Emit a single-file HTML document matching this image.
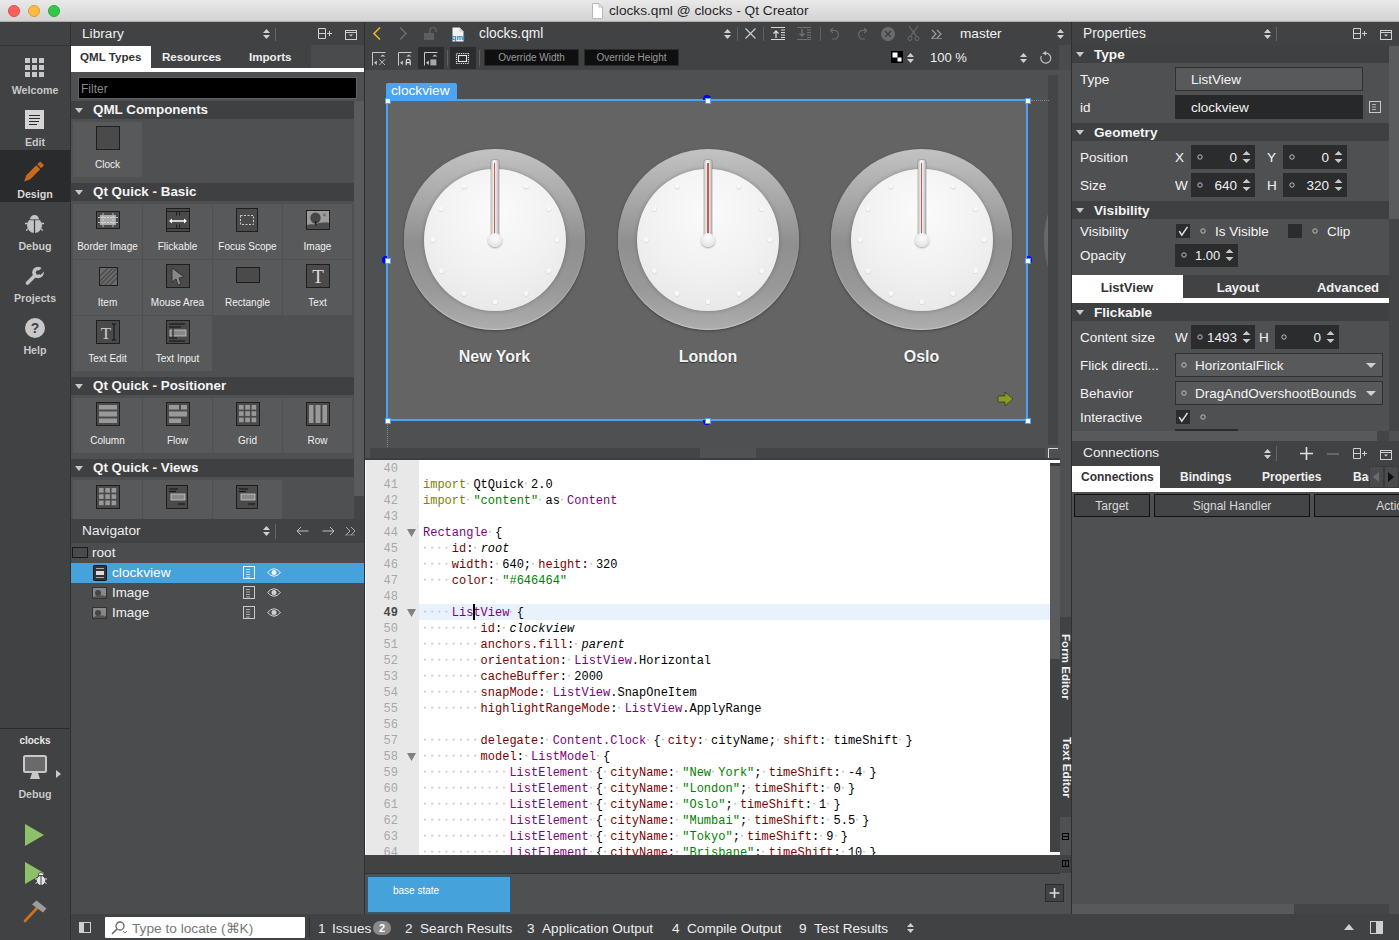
<!DOCTYPE html><html><head><meta charset="utf-8"><style>
*{margin:0;padding:0;box-sizing:border-box}
html,body{width:1399px;height:940px;overflow:hidden;background:#4f5052;font-family:"Liberation Sans",sans-serif}
div{position:absolute}
.t{white-space:nowrap;line-height:1}
svg{position:absolute;overflow:visible}
.ws{background-image:radial-gradient(circle at 2px 5.6px,#c8c8c8 0,#c8c8c8 0.7px,rgba(200,200,200,0) 1.3px);background-size:7.2px 100%;background-repeat:repeat-x}
.code{font-family:"Liberation Mono",monospace;font-size:12px;line-height:16px;white-space:pre;color:#000}
</style></head><body><div style="left:0px;top:0px;width:1399px;height:22px;background:linear-gradient(#e9e9e9,#d3d3d3);border-bottom:1px solid #aeaeae"></div><div style="left:8px;top:5px;width:12px;height:12px;border-radius:50%;background:#fc605c;border:0.5px solid #de4a46"></div><div style="left:28px;top:5px;width:12px;height:12px;border-radius:50%;background:#fdbc40;border:0.5px solid #dc9d2e"></div><div style="left:48px;top:5px;width:12px;height:12px;border-radius:50%;background:#34c84a;border:0.5px solid #26a93a"></div><svg style="left:591px;top:3px;" width="13" height="16" viewBox="0 0 13 16"><path d="M1.5 0.5 H8 L11.5 4 V15.5 H1.5 Z" fill="#fff" stroke="#b8b8b8"/><path d="M8 0.5 V4 H11.5" fill="none" stroke="#b8b8b8"/></svg><div class="t" style="left:609px;top:4px;font-size:13.7px;color:#262626">clocks.qml @ clocks - Qt Creator</div><div style="left:0px;top:22px;width:70px;height:918px;background:#404244"></div><div style="left:70px;top:22px;width:1px;height:918px;background:#2e2f30"></div><div style="left:0px;top:45px;width:70px;height:1px;background:#333436"></div><div style="left:0px;top:150px;width:70px;height:52px;background:#2a2b2c"></div><svg style="left:25px;top:58px;" width="19" height="19" viewBox="0 0 19 19"><rect x="0" y="0" width="5" height="5" fill="#c8c8c8"/><rect x="7" y="0" width="5" height="5" fill="#c8c8c8"/><rect x="14" y="0" width="5" height="5" fill="#c8c8c8"/><rect x="0" y="7" width="5" height="5" fill="#c8c8c8"/><rect x="7" y="7" width="5" height="5" fill="#c8c8c8"/><rect x="14" y="7" width="5" height="5" fill="#c8c8c8"/><rect x="0" y="14" width="5" height="5" fill="#c8c8c8"/><rect x="7" y="14" width="5" height="5" fill="#c8c8c8"/><rect x="14" y="14" width="5" height="5" fill="#c8c8c8"/></svg><div class="t" style="left:0.0px;top:85px;width:70px;text-align:center;font-size:10.7px;font-weight:bold;color:#c8c8c8">Welcome</div><svg style="left:25px;top:110px;" width="19" height="19" viewBox="0 0 19 19"><rect x="0" y="0" width="19" height="19" fill="#d4d4d4"/><path d="M4 5.5h11M4 8.5h11M4 11.5h10M4 14.5h8" stroke="#2a2a2a" stroke-width="1"/></svg><div class="t" style="left:0.0px;top:137px;width:70px;text-align:center;font-size:10.7px;font-weight:bold;color:#c8c8c8">Edit</div><svg style="left:23px;top:160px;" width="22" height="23" viewBox="0 0 22 23"><g transform="translate(11 11.5) rotate(45)"><path d="M0 14 L-2.8 8 V-6 H2.8 V8 Z" fill="#c96a1c"/><rect x="-2.8" y="-11.5" width="5.6" height="4.2" fill="#c96a1c"/></g></svg><div class="t" style="left:0.0px;top:189px;width:70px;text-align:center;font-size:10.7px;font-weight:bold;color:#d8d8d8">Design</div><svg style="left:24px;top:213px;" width="21" height="21" viewBox="0 0 21 21"><path d="M6 6.5 A4.5 4.5 0 0 1 15 6.5Z" fill="#c4c4c4"/><ellipse cx="10.5" cy="12.5" rx="7.5" ry="7.5" fill="#c4c4c4"/><path d="M10.5 6.5 V20" stroke="#404244" stroke-width="1.3"/><path d="M6 6.8 H15" stroke="#404244" stroke-width="0.8"/><path d="M1 10.5 H3.5 M17.5 10.5 H20 M2 17.5 L4 16 M19 17.5 L17 16" stroke="#c4c4c4" stroke-width="1.3"/></svg><div class="t" style="left:0.0px;top:241px;width:70px;text-align:center;font-size:10.7px;font-weight:bold;color:#c8c8c8">Debug</div><svg style="left:24px;top:265px;" width="21" height="21" viewBox="0 0 21 21"><path d="M3.5 18 L11 10.5" stroke="#c4c4c4" stroke-width="3.6" stroke-linecap="round"/><circle cx="14" cy="7.5" r="5.8" fill="#c4c4c4"/><path d="M14 7.5 L19 2.5 L22 5.5 L17 10.5Z" fill="#404244" transform="translate(-0.5 -0.5)"/><circle cx="14" cy="7.5" r="2.2" fill="#404244"/></svg><div class="t" style="left:0.0px;top:293px;width:70px;text-align:center;font-size:10.7px;font-weight:bold;color:#c8c8c8">Projects</div><svg style="left:25px;top:318px;" width="20" height="20" viewBox="0 0 20 20"><circle cx="10" cy="10" r="10" fill="#c8c8c8"/><text x="10" y="15" font-family="Liberation Sans" font-weight="bold" font-size="14" text-anchor="middle" fill="#404244">?</text></svg><div class="t" style="left:0.0px;top:345px;width:70px;text-align:center;font-size:10.7px;font-weight:bold;color:#c8c8c8">Help</div><div style="left:0px;top:728px;width:70px;height:1px;background:#2a2b2c"></div><div class="t" style="left:0.0px;top:736px;width:70px;text-align:center;font-size:10px;font-weight:bold;color:#e8e8e8">clocks</div><svg style="left:23px;top:755px;" width="24" height="25" viewBox="0 0 24 25"><rect x="1" y="1" width="22" height="16" rx="1.5" fill="#6a6a6a" stroke="#c8c8c8" stroke-width="2"/><path d="M9 18 L15 18 L17 24 L7 24 Z" fill="#c8c8c8"/></svg><svg style="left:56px;top:770px;" width="5" height="8" viewBox="0 0 5 8"><path d="M0 0 L5 4 L0 8Z" fill="#c8c8c8"/></svg><div class="t" style="left:0.0px;top:789px;width:70px;text-align:center;font-size:10.7px;font-weight:bold;color:#c8c8c8">Debug</div><svg style="left:25px;top:824px;" width="19" height="22" viewBox="0 0 19 22"><path d="M0 0 L19 11 L0 22Z" fill="#8ec26a"/></svg><svg style="left:25px;top:862px;" width="21" height="24" viewBox="0 0 21 24"><path d="M0 0 L19 11 L0 22Z" fill="#8ec26a"/><path d="M13 13.5 A3 3 0 0 1 19 13.5Z" fill="#e6e6e6" stroke="#404244" stroke-width="0.8"/><ellipse cx="16" cy="18.5" rx="4.6" ry="5" fill="#e6e6e6" stroke="#404244" stroke-width="1"/><path d="M16 14 V23.5" stroke="#404244" stroke-width="1"/><path d="M10 17 H12 M20 17 H22 M10.5 21.5 L12 20.5 M21.5 21.5 L20 20.5" stroke="#e6e6e6" stroke-width="1"/></svg><svg style="left:22px;top:899px;" width="26" height="24" viewBox="0 0 26 24"><path d="M3 22 L15 9" stroke="#d2711f" stroke-width="2.6" stroke-linecap="round"/><path d="M10 5.5 L14.5 1.5 L24.5 9.5 L21 13.5 Z" fill="#9c9c9c"/></svg><div style="left:71px;top:22px;width:293px;height:23px;background:#404244"></div><div class="t" style="left:82px;top:27px;font-size:13.7px;color:#eeeeee">Library</div><svg style="left:263px;top:29px;" width="7" height="10" viewBox="0 0 7 10"><path d="M0 4 L3.5 0 L7 4Z M0 6 L3.5 10 L7 6Z" fill="#d0d0d0"/></svg><div style="left:275px;top:28px;width:1px;height:13px;background:#666"></div><svg style="left:318px;top:28px;" width="14" height="12" viewBox="0 0 14 12"><path d="M0.5 0.5h7v10h-7z M0.5 5.5h7" fill="none" stroke="#d0d0d0"/><path d="M9 5.5h5M11.5 3v5" stroke="#d0d0d0"/></svg><svg style="left:345px;top:29px;" width="12" height="11" viewBox="0 0 12 11"><rect x="0.5" y="1.5" width="11" height="9" fill="none" stroke="#d0d0d0"/><path d="M0.5 3.5h11" stroke="#d0d0d0"/><path d="M4 5.5 L8 5.5 L6 7.5Z" fill="#d0d0d0"/></svg><div style="left:71px;top:45px;width:293px;height:23px;background:#404244"></div><div style="left:311px;top:45px;width:53px;height:23px;background:#4a4b4d"></div><div style="left:71px;top:46px;width:80px;height:22px;background:#ffffff"></div><div style="left:71px;top:68px;width:293px;height:4px;background:#ffffff"></div><div class="t" style="left:80px;top:51px;font-size:11.6px;font-weight:bold;color:#333">QML Types</div><div class="t" style="left:162px;top:51px;font-size:11.6px;font-weight:bold;color:#eeeeee">Resources</div><div class="t" style="left:249px;top:51px;font-size:11.6px;font-weight:bold;color:#eeeeee">Imports</div><div style="left:71px;top:72px;width:293px;height:447px;background:#4f5052"></div><div style="left:78px;top:77px;width:279px;height:22px;background:#000;border:1px solid #606162"></div><div class="t" style="left:81px;top:83px;font-size:12px;color:#8a8a8a">Filter</div><div style="left:354px;top:101px;width:10px;height:395px;background:#5a5b5d"></div><div style="left:354px;top:496px;width:10px;height:23px;background:#444547"></div><div style="left:71px;top:101px;width:283px;height:18px;background:#3e4042"></div><svg style="left:75px;top:108px;" width="8" height="5" viewBox="0 0 8 5"><path d="M0 0 L8 0 L4 5Z" fill="#c8c8c8"/></svg><div class="t" style="left:93px;top:103px;font-size:13.4px;font-weight:bold;color:#f4f4f4">QML Components</div><div style="left:73px;top:122px;width:69px;height:55px;background:#58595b"></div><svg style="left:96px;top:126px;" width="24" height="24" viewBox="0 0 24 24"><rect x="0.5" y="0.5" width="23" height="23" fill="#4a4a4a" stroke="#1e1e1e"/></svg><div class="t" style="left:73.0px;top:160px;width:69px;text-align:center;font-size:10px;color:#f0f0f0">Clock</div><div style="left:71px;top:183px;width:283px;height:18px;background:#3e4042"></div><svg style="left:75px;top:190px;" width="8" height="5" viewBox="0 0 8 5"><path d="M0 0 L8 0 L4 5Z" fill="#c8c8c8"/></svg><div class="t" style="left:93px;top:185px;font-size:13.4px;font-weight:bold;color:#f4f4f4">Qt Quick - Basic</div><div style="left:73px;top:204px;width:69px;height:55px;background:#58595b"></div><svg style="left:96px;top:208px;" width="24" height="24" viewBox="0 0 24 24"><rect x="0.5" y="3.5" width="23" height="17" fill="#4a4a4a" stroke="#1e1e1e"/><rect x="4" y="7" width="16" height="10" fill="#aaa"/><path d="M2 9.5h20M2 14.5h20M7 5v14M17 5v14" stroke="#ddd" stroke-dasharray="2 1" stroke-width="0.8"/></svg><div class="t" style="left:73.0px;top:242px;width:69px;text-align:center;font-size:10px;color:#f0f0f0">Border Image</div><div style="left:143px;top:204px;width:69px;height:55px;background:#58595b"></div><svg style="left:166px;top:208px;" width="24" height="24" viewBox="0 0 24 24"><rect x="0.5" y="0.5" width="23" height="23" fill="#4a4a4a" stroke="#1e1e1e"/><path d="M0.5 3.5h23M0.5 20.5h23M10.5 3.5v4M13.5 3.5v4M10.5 16.5v4M13.5 16.5v4" stroke="#1e1e1e"/><path d="M4 13h16" stroke="#fff" stroke-width="1.5"/><path d="M3 13l3-2.5v5zM21 13l-3-2.5v5z" fill="#fff"/></svg><div class="t" style="left:143.0px;top:242px;width:69px;text-align:center;font-size:10px;color:#f0f0f0">Flickable</div><div style="left:213px;top:204px;width:69px;height:55px;background:#58595b"></div><svg style="left:236px;top:208px;" width="24" height="24" viewBox="0 0 24 24"><rect x="0.5" y="0.5" width="21" height="23" fill="#4a4a4a" stroke="#1e1e1e"/><rect x="4.5" y="7.5" width="13" height="9" fill="none" stroke="#ccc" stroke-dasharray="2 1.5"/></svg><div class="t" style="left:213.0px;top:242px;width:69px;text-align:center;font-size:10px;color:#f0f0f0">Focus Scope</div><div style="left:283px;top:204px;width:69px;height:55px;background:#58595b"></div><svg style="left:306px;top:208px;" width="24" height="24" viewBox="0 0 24 24"><rect x="0.5" y="2.5" width="23" height="19" fill="#9c9c9c" stroke="#1e1e1e"/><path d="M1 17 Q4 16 9 16.5 Q14 14 18 14.5 Q21 14 23 15 V21 H1Z" fill="#4c4c4c"/><ellipse cx="9.5" cy="10" rx="5.2" ry="5.6" fill="#474747"/><rect x="8.8" y="13" width="1.6" height="4.5" fill="#222"/><circle cx="18.5" cy="7" r="1.4" fill="#707070"/></svg><div class="t" style="left:283.0px;top:242px;width:69px;text-align:center;font-size:10px;color:#f0f0f0">Image</div><div style="left:73px;top:260px;width:69px;height:55px;background:#58595b"></div><svg style="left:96px;top:264px;" width="24" height="24" viewBox="0 0 24 24"><rect x="3.5" y="3.5" width="18" height="18" fill="#6a6a6a" stroke="#1e1e1e"/><path d="M4 12 L12 4 M4 17 L17 4 M4 21 L21 4 M9 21 L21 9 M14 21 L21 14" stroke="#4a4a4a" stroke-width="1.2"/></svg><div class="t" style="left:73.0px;top:298px;width:69px;text-align:center;font-size:10px;color:#f0f0f0">Item</div><div style="left:143px;top:260px;width:69px;height:55px;background:#58595b"></div><svg style="left:166px;top:264px;" width="24" height="24" viewBox="0 0 24 24"><rect x="0.5" y="0.5" width="23" height="23" fill="#4a4a4a" stroke="#1e1e1e"/><path d="M6 4 L18 13 L13 14 L15 20 L12 21 L10 15 L6 18Z" fill="#888" stroke="#2a2a2a" stroke-width="0.8"/></svg><div class="t" style="left:143.0px;top:298px;width:69px;text-align:center;font-size:10px;color:#f0f0f0">Mouse Area</div><div style="left:213px;top:260px;width:69px;height:55px;background:#58595b"></div><svg style="left:236px;top:264px;" width="24" height="24" viewBox="0 0 24 24"><rect x="0.5" y="3.5" width="23" height="15" fill="#4a4a4a" stroke="#1e1e1e"/></svg><div class="t" style="left:213.0px;top:298px;width:69px;text-align:center;font-size:10px;color:#f0f0f0">Rectangle</div><div style="left:283px;top:260px;width:69px;height:55px;background:#58595b"></div><svg style="left:306px;top:264px;" width="24" height="24" viewBox="0 0 24 24"><rect x="0.5" y="0.5" width="23" height="23" fill="#4a4a4a" stroke="#1e1e1e"/><text x="12" y="19" font-family="Liberation Serif" font-size="19" text-anchor="middle" fill="#ddd">T</text></svg><div class="t" style="left:283.0px;top:298px;width:69px;text-align:center;font-size:10px;color:#f0f0f0">Text</div><div style="left:73px;top:316px;width:69px;height:55px;background:#58595b"></div><svg style="left:96px;top:320px;" width="24" height="24" viewBox="0 0 24 24"><rect x="0.5" y="0.5" width="23" height="23" fill="#4a4a4a" stroke="#1e1e1e"/><text x="10" y="19" font-family="Liberation Serif" font-size="17" text-anchor="middle" fill="#ccc">T</text><path d="M18 4v16M16 4h4M16 20h4" stroke="#111"/></svg><div class="t" style="left:73.0px;top:354px;width:69px;text-align:center;font-size:10px;color:#f0f0f0">Text Edit</div><div style="left:143px;top:316px;width:69px;height:55px;background:#58595b"></div><svg style="left:166px;top:320px;" width="24" height="24" viewBox="0 0 24 24"><rect x="0.5" y="0.5" width="23" height="23" fill="#4a4a4a" stroke="#1e1e1e"/><path d="M3 4h16M3 7h12M3 18h8M3 21h16" stroke="#111"/><rect x="4" y="10" width="16" height="6" fill="#888" stroke="#ccc" stroke-width="0.8"/><path d="M7 9v8" stroke="#111"/></svg><div class="t" style="left:143.0px;top:354px;width:69px;text-align:center;font-size:10px;color:#f0f0f0">Text Input</div><div style="left:71px;top:377px;width:283px;height:18px;background:#3e4042"></div><svg style="left:75px;top:384px;" width="8" height="5" viewBox="0 0 8 5"><path d="M0 0 L8 0 L4 5Z" fill="#c8c8c8"/></svg><div class="t" style="left:93px;top:379px;font-size:13.4px;font-weight:bold;color:#f4f4f4">Qt Quick - Positioner</div><div style="left:73px;top:398px;width:69px;height:55px;background:#58595b"></div><svg style="left:96px;top:402px;" width="24" height="24" viewBox="0 0 24 24"><rect x="0.5" y="0.5" width="23" height="23" fill="#4a4a4a" stroke="#1e1e1e"/><rect x="3" y="3" width="18" height="4.5" fill="#999"/><rect x="3" y="9.5" width="18" height="5" fill="#999"/><rect x="3" y="16.5" width="18" height="4.5" fill="#999"/></svg><div class="t" style="left:73.0px;top:436px;width:69px;text-align:center;font-size:10px;color:#f0f0f0">Column</div><div style="left:143px;top:398px;width:69px;height:55px;background:#58595b"></div><svg style="left:166px;top:402px;" width="24" height="24" viewBox="0 0 24 24"><rect x="0.5" y="0.5" width="23" height="23" fill="#4a4a4a" stroke="#1e1e1e"/><rect x="3" y="3" width="10" height="4.5" fill="#999"/><rect x="15" y="3" width="6" height="4.5" fill="#999"/><rect x="3" y="9.5" width="18" height="5" fill="#999"/><rect x="3" y="16.5" width="12" height="4.5" fill="#999"/></svg><div class="t" style="left:143.0px;top:436px;width:69px;text-align:center;font-size:10px;color:#f0f0f0">Flow</div><div style="left:213px;top:398px;width:69px;height:55px;background:#58595b"></div><svg style="left:236px;top:402px;" width="24" height="24" viewBox="0 0 24 24"><rect x="0.5" y="0.5" width="23" height="23" fill="#4a4a4a" stroke="#1e1e1e"/><rect x="3.0" y="3.0" width="4.6" height="4.6" fill="#999"/><rect x="9.3" y="3.0" width="4.6" height="4.6" fill="#999"/><rect x="15.6" y="3.0" width="4.6" height="4.6" fill="#999"/><rect x="3.0" y="9.3" width="4.6" height="4.6" fill="#999"/><rect x="9.3" y="9.3" width="4.6" height="4.6" fill="#999"/><rect x="15.6" y="9.3" width="4.6" height="4.6" fill="#999"/><rect x="3.0" y="15.6" width="4.6" height="4.6" fill="#999"/><rect x="9.3" y="15.6" width="4.6" height="4.6" fill="#999"/><rect x="15.6" y="15.6" width="4.6" height="4.6" fill="#999"/></svg><div class="t" style="left:213.0px;top:436px;width:69px;text-align:center;font-size:10px;color:#f0f0f0">Grid</div><div style="left:283px;top:398px;width:69px;height:55px;background:#58595b"></div><svg style="left:306px;top:402px;" width="24" height="24" viewBox="0 0 24 24"><rect x="0.5" y="0.5" width="23" height="23" fill="#4a4a4a" stroke="#1e1e1e"/><rect x="3" y="3" width="4.5" height="18" fill="#999"/><rect x="9.5" y="3" width="5" height="18" fill="#999"/><rect x="16.5" y="3" width="4.5" height="18" fill="#999"/></svg><div class="t" style="left:283.0px;top:436px;width:69px;text-align:center;font-size:10px;color:#f0f0f0">Row</div><div style="left:71px;top:459px;width:283px;height:18px;background:#3e4042"></div><svg style="left:75px;top:466px;" width="8" height="5" viewBox="0 0 8 5"><path d="M0 0 L8 0 L4 5Z" fill="#c8c8c8"/></svg><div class="t" style="left:93px;top:461px;font-size:13.4px;font-weight:bold;color:#f4f4f4">Qt Quick - Views</div><div style="left:73px;top:480px;width:69px;height:39px;background:#58595b"></div><svg style="left:96px;top:485px;" width="24" height="24" viewBox="0 0 24 24"><rect x="0.5" y="0.5" width="23" height="23" fill="#4a4a4a" stroke="#1e1e1e"/><rect x="3.0" y="3.0" width="4.6" height="4.6" fill="#999"/><rect x="9.3" y="3.0" width="4.6" height="4.6" fill="#999"/><rect x="15.6" y="3.0" width="4.6" height="4.6" fill="#999"/><rect x="3.0" y="9.3" width="4.6" height="4.6" fill="#999"/><rect x="9.3" y="9.3" width="4.6" height="4.6" fill="#999"/><rect x="15.6" y="9.3" width="4.6" height="4.6" fill="#999"/><rect x="3.0" y="15.6" width="4.6" height="4.6" fill="#999"/><rect x="9.3" y="15.6" width="4.6" height="4.6" fill="#999"/><rect x="15.6" y="15.6" width="4.6" height="4.6" fill="#999"/></svg><div style="left:143px;top:480px;width:69px;height:39px;background:#58595b"></div><svg style="left:166px;top:485px;" width="24" height="24" viewBox="0 0 24 24"><rect x="0.5" y="0.5" width="21" height="23" fill="#4a4a4a" stroke="#1e1e1e"/><path d="M3 4h9M3 6.5h7M12 19h7" stroke="#111"/><rect x="5" y="9" width="14" height="6" fill="#888" stroke="#ccc" stroke-width="0.8"/></svg><div style="left:213px;top:480px;width:69px;height:39px;background:#58595b"></div><svg style="left:236px;top:485px;" width="24" height="24" viewBox="0 0 24 24"><rect x="0.5" y="0.5" width="21" height="23" fill="#4a4a4a" stroke="#1e1e1e"/><path d="M3 4h9M3 6.5h7M12 19h7" stroke="#111"/><rect x="5" y="9" width="14" height="6" fill="#888" stroke="#ccc" stroke-width="0.8"/></svg><div style="left:71px;top:519px;width:293px;height:24px;background:#404244"></div><div class="t" style="left:82px;top:524px;font-size:13.7px;color:#eeeeee">Navigator</div><svg style="left:263px;top:526px;" width="7" height="10" viewBox="0 0 7 10"><path d="M0 4 L3.5 0 L7 4Z M0 6 L3.5 10 L7 6Z" fill="#d0d0d0"/></svg><div style="left:275px;top:524px;width:1px;height:15px;background:#666"></div><svg style="left:296px;top:526px;" width="13" height="10" viewBox="0 0 13 10"><path d="M12.5 5H1M5 1L1 5L5 9" fill="none" stroke="#c0c0c0"/></svg><svg style="left:322px;top:526px;" width="13" height="10" viewBox="0 0 13 10"><path d="M0.5 5H12M8 1L12 5L8 9" fill="none" stroke="#c0c0c0"/></svg><svg style="left:345px;top:527px;" width="14" height="9" viewBox="0 0 14 9"><path d="M1 8 L5 4 L1 0 M6 8 L10 4 L6 0" fill="none" stroke="#aaa"/><path d="M0 8h10" stroke="#aaa" stroke-width="0.6"/></svg><div style="left:71px;top:543px;width:293px;height:372px;background:#4b4c4e"></div><svg style="left:72px;top:547px;" width="16" height="11" viewBox="0 0 16 11"><rect x="0.5" y="0.5" width="15" height="10" fill="#4a4a4a" stroke="#1a1a1a"/></svg><div class="t" style="left:92px;top:546px;font-size:13.6px;color:#f0f0f0">root</div><div style="left:71px;top:563px;width:293px;height:20px;background:#46a2da"></div><svg style="left:93px;top:565px;" width="14" height="16" viewBox="0 0 14 16"><rect x="0.5" y="0.5" width="13" height="15" rx="1" fill="#333" stroke="#111"/><rect x="3" y="6" width="8" height="4" fill="#ddd"/><path d="M3 3.5h8M3 12.5h8" stroke="#aaa"/></svg><div class="t" style="left:112px;top:566px;font-size:13.7px;color:#ffffff">clockview</div><svg style="left:243px;top:566px;" width="12" height="13" viewBox="0 0 12 13"><rect x="0.5" y="0.5" width="11" height="12" fill="none" stroke="#e8f4ff"/><path d="M3 3.5h4M3 6h4M3 8.5h4M3 11h4" stroke="#e8f4ff" stroke-width="0.8"/></svg><svg style="left:267px;top:568px;" width="14" height="9" viewBox="0 0 14 9"><path d="M0.5 4.5 Q7 -3 13.5 4.5 Q7 12 0.5 4.5Z" fill="none" stroke="#e8f4ff"/><circle cx="7" cy="4.5" r="2.5" fill="#e8f4ff"/></svg><svg style="left:92px;top:587px;" width="15" height="12" viewBox="0 0 15 12"></svg><svg style="left:92px;top:587px;" width="15" height="12" viewBox="0 0 15 12"><rect x="0.5" y="0.5" width="14" height="11" fill="#888" stroke="#333"/><circle cx="6" cy="6" r="3" fill="#444"/><path d="M1 10 Q7 7 14 9 V11H1Z" fill="#555"/></svg><div class="t" style="left:112px;top:586px;font-size:13.4px;color:#f0f0f0">Image</div><svg style="left:243px;top:586px;" width="12" height="13" viewBox="0 0 12 13"><rect x="0.5" y="0.5" width="11" height="12" fill="none" stroke="#c8c8c8"/><path d="M3 3.5h4M3 6h4M3 8.5h4M3 11h4" stroke="#c8c8c8" stroke-width="0.8"/></svg><svg style="left:267px;top:588px;" width="14" height="9" viewBox="0 0 14 9"><path d="M0.5 4.5 Q7 -3 13.5 4.5 Q7 12 0.5 4.5Z" fill="none" stroke="#d0d0d0"/><circle cx="7" cy="4.5" r="2.5" fill="#d0d0d0"/></svg><svg style="left:92px;top:587px;" width="15" height="12" viewBox="0 0 15 12"></svg><svg style="left:92px;top:607px;" width="15" height="12" viewBox="0 0 15 12"><rect x="0.5" y="0.5" width="14" height="11" fill="#888" stroke="#333"/><circle cx="6" cy="6" r="3" fill="#444"/><path d="M1 10 Q7 7 14 9 V11H1Z" fill="#555"/></svg><div class="t" style="left:112px;top:606px;font-size:13.4px;color:#f0f0f0">Image</div><svg style="left:243px;top:606px;" width="12" height="13" viewBox="0 0 12 13"><rect x="0.5" y="0.5" width="11" height="12" fill="none" stroke="#c8c8c8"/><path d="M3 3.5h4M3 6h4M3 8.5h4M3 11h4" stroke="#c8c8c8" stroke-width="0.8"/></svg><svg style="left:267px;top:608px;" width="14" height="9" viewBox="0 0 14 9"><path d="M0.5 4.5 Q7 -3 13.5 4.5 Q7 12 0.5 4.5Z" fill="none" stroke="#d0d0d0"/><circle cx="7" cy="4.5" r="2.5" fill="#d0d0d0"/></svg><div style="left:364px;top:22px;width:1px;height:893px;background:#2e2f30"></div><div style="left:71px;top:914px;width:1328px;height:26px;background:#404244"></div><svg style="left:79px;top:922px;" width="12" height="11" viewBox="0 0 12 11"><rect x="0.5" y="0.5" width="11" height="10" fill="none" stroke="#d0d0d0"/><rect x="1" y="1" width="4" height="9" fill="#d0d0d0"/></svg><div style="left:105px;top:917px;width:200px;height:21px;background:#fff;border-radius:1px"></div><svg style="left:111px;top:921px;" width="15" height="13" viewBox="0 0 15 13"><circle cx="9" cy="5" r="4" fill="none" stroke="#666" stroke-width="1.3"/><path d="M6 8 L1 13" stroke="#666" stroke-width="1.6"/><path d="M12 10l2 2 2-2" fill="none" stroke="#666" stroke-width="0.8"/></svg><div class="t" style="left:132px;top:922px;font-size:13.7px;color:#777">Type to locate (⌘K)</div><div style="left:309px;top:917px;width:1px;height:20px;background:#2e2f30"></div><div class="t" style="left:318px;top:922px;font-size:13.6px;color:#eeeeee">1</div><div class="t" style="left:332px;top:922px;font-size:13.6px;color:#eeeeee">Issues</div><div style="left:373px;top:921px;width:18px;height:14px;background:#8a8a8a;border-radius:7px"></div><div class="t" style="left:373.0px;top:923px;width:18px;text-align:center;font-size:11px;font-weight:bold;color:#fff">2</div><div class="t" style="left:405px;top:922px;font-size:13.6px;color:#eeeeee">2</div><div class="t" style="left:420px;top:922px;font-size:13.6px;color:#eeeeee">Search Results</div><div class="t" style="left:527px;top:922px;font-size:13.6px;color:#eeeeee">3</div><div class="t" style="left:542px;top:922px;font-size:13.6px;color:#eeeeee">Application Output</div><div class="t" style="left:672px;top:922px;font-size:13.6px;color:#eeeeee">4</div><div class="t" style="left:687px;top:922px;font-size:13.6px;color:#eeeeee">Compile Output</div><div class="t" style="left:799px;top:922px;font-size:13.6px;color:#eeeeee">9</div><div class="t" style="left:814px;top:922px;font-size:13.6px;color:#eeeeee">Test Results</div><svg style="left:907px;top:923px;" width="7" height="10" viewBox="0 0 7 10"><path d="M0 4 L3.5 0 L7 4Z M0 6 L3.5 10 L7 6Z" fill="#d0d0d0"/></svg><svg style="left:1344px;top:924px;" width="10" height="6" viewBox="0 0 10 6"><path d="M0 6 L5 0 L10 6Z" fill="#d0d0d0"/></svg><svg style="left:1370px;top:921px;" width="13" height="13" viewBox="0 0 13 13"><rect x="0.5" y="0.5" width="12" height="12" fill="none" stroke="#d0d0d0"/><rect x="6" y="1" width="6" height="11" fill="#d0d0d0"/></svg><div style="left:365px;top:22px;width:706px;height:23px;background:#404244"></div><svg style="left:373px;top:27px;" width="8" height="13" viewBox="0 0 8 13"><path d="M7 0.5 L1 6.5 L7 12.5" fill="none" stroke="#e8b92e" stroke-width="1.6"/></svg><svg style="left:399px;top:27px;" width="8" height="13" viewBox="0 0 8 13"><path d="M1 0.5 L7 6.5 L1 12.5" fill="none" stroke="#6a6c6e" stroke-width="1.6"/></svg><svg style="left:424px;top:27px;" width="13" height="13" viewBox="0 0 13 13"><rect x="0" y="6" width="10" height="7" fill="#5c5e60"/><path d="M6 6 V3.5 A3 3 0 0 1 12 3.5 V5" fill="none" stroke="#5c5e60" stroke-width="1.6"/></svg><svg style="left:451px;top:27px;" width="14" height="15" viewBox="0 0 14 15"><path d="M1.5 0.5 H8.5 L12.5 4.5 V14.5 H1.5 Z" fill="#f2f2f2"/><path d="M8.5 0.5 V4.5 H12.5" fill="#d0d0d0"/><text x="7.5" y="13.2" font-family="Liberation Sans" font-weight="bold" font-size="7.5" text-anchor="middle" fill="#1a7fb8">qml</text></svg><div class="t" style="left:479px;top:27px;font-size:13.8px;color:#f2f2f2">clocks.qml</div><svg style="left:724px;top:29px;" width="7" height="10" viewBox="0 0 7 10"><path d="M0 4 L3.5 0 L7 4Z M0 6 L3.5 10 L7 6Z" fill="#d0d0d0"/></svg><div style="left:737px;top:27px;width:1px;height:14px;background:#5e6062"></div><svg style="left:745px;top:28px;" width="11" height="11" viewBox="0 0 11 11"><path d="M0.5 0.5 L10.5 10.5 M10.5 0.5 L0.5 10.5" stroke="#d0d0d0" stroke-width="1.1"/></svg><div style="left:763px;top:27px;width:1px;height:14px;background:#5e6062"></div><svg style="left:771px;top:27px;" width="14" height="13" viewBox="0 0 14 13"><path d="M0 0.5h14M0 12.5h14M10 3h4M10 5.5h4M10 8h4M10 10.5h4" stroke="#d8d8d8"/><path d="M5 11 V4 M2.5 6.5 L5 4 L7.5 6.5" fill="none" stroke="#d8d8d8" stroke-width="1.3"/></svg><svg style="left:797px;top:27px;" width="14" height="13" viewBox="0 0 14 13"><path d="M0 0.5h14M0 12.5h14M10 3h4M10 5.5h4M10 8h4M10 10.5h4" stroke="#707274"/><path d="M5 2 V9 M2.5 6.5 L5 9 L7.5 6.5" fill="none" stroke="#707274" stroke-width="1.3"/></svg><div style="left:820px;top:27px;width:1px;height:14px;background:#5e6062"></div><svg style="left:830px;top:27px;" width="12" height="12" viewBox="0 0 12 12"><path d="M3 1 L0.5 3.5 L3 6 M0.5 3.5 H6 A5 5 0 0 1 6 12 H2" fill="none" stroke="#6a6c6e" stroke-width="1.2"/></svg><svg style="left:855px;top:27px;" width="12" height="12" viewBox="0 0 12 12"><path d="M9 1 L11.5 3.5 L9 6 M11.5 3.5 H6 A5 5 0 0 0 6 12 H10" fill="none" stroke="#6a6c6e" stroke-width="1.2"/></svg><svg style="left:881px;top:27px;" width="14" height="14" viewBox="0 0 14 14"><circle cx="7" cy="7" r="7" fill="#6a6c6e"/><path d="M4 4 L10 10 M10 4 L4 10" stroke="#404244" stroke-width="1.6"/></svg><svg style="left:907px;top:26px;" width="13" height="15" viewBox="0 0 13 15"><path d="M2 0 L10 11 M11 0 L3 11" stroke="#6a6c6e" stroke-width="1.2"/><circle cx="3" cy="12.5" r="2" fill="none" stroke="#6a6c6e"/><circle cx="10" cy="12.5" r="2" fill="none" stroke="#6a6c6e"/></svg><svg style="left:931px;top:30px;" width="14" height="9" viewBox="0 0 14 9"><path d="M1 8 L5 4 L1 0 M6 8 L10 4 L6 0" fill="none" stroke="#a0a0a0" stroke-width="1.1"/><path d="M0 8.5h11" stroke="#a0a0a0" stroke-width="0.7"/></svg><div class="t" style="left:960px;top:27px;font-size:13.6px;color:#f2f2f2">master</div><svg style="left:1057px;top:29px;" width="7" height="10" viewBox="0 0 7 10"><path d="M0 4 L3.5 0 L7 4Z M0 6 L3.5 10 L7 6Z" fill="#d0d0d0"/></svg><div style="left:365px;top:45px;width:706px;height:25px;background:#404244"></div><svg style="left:372px;top:52px;" width="14" height="14" viewBox="0 0 14 14"><path d="M0.5 13.5 V0.5 H13.5" stroke="#c8c8c8" stroke-width="1" fill="none"/><path d="M8.3 4.6 L10.8 2.4 L13.3 4.6Z" fill="#c8c8c8"/><path d="M2 10.8 L4.8 8.6 V13Z" fill="#c8c8c8"/><path d="M7.3 7.3 L13 13 M13 7.3 L7.3 13" stroke="#c8c8c8" stroke-width="0.9"/></svg><div style="left:418px;top:47px;width:26px;height:22px;background:#2b2c2d"></div><svg style="left:398px;top:52px;" width="14" height="14" viewBox="0 0 14 14"><path d="M0.5 13.5 V0.5 H13.5" stroke="#c8c8c8" stroke-width="1" fill="none"/><path d="M8.3 4.6 L10.8 2.4 L13.3 4.6Z" fill="#c8c8c8"/><path d="M2 10.8 L4.8 8.6 V13Z" fill="#c8c8c8"/><path d="M8.2 13.2 V9.2 Q8.2 7.4 10.2 7.4 Q12.2 7.4 12.2 9.2 V13.2 M8.2 10.6 H12.2" stroke="#e0e0e0" stroke-width="1.1" fill="none"/></svg><svg style="left:424px;top:52px;" width="14" height="14" viewBox="0 0 14 14"><path d="M0.5 13.5 V0.5 H13.5" stroke="#c8c8c8" stroke-width="1" fill="none"/><path d="M8.3 4.6 L10.8 2.4 L13.3 4.6Z" fill="#c8c8c8"/><path d="M2 10.8 L4.8 8.6 V13Z" fill="#c8c8c8"/><rect x="6.4" y="7.4" width="6" height="6" fill="#a8a8a8"/></svg><div style="left:447px;top:50px;width:1px;height:16px;background:#5e6062"></div><div style="left:450px;top:47px;width:26px;height:22px;background:#2b2c2d"></div><svg style="left:455px;top:52px;" width="15" height="13" viewBox="0 0 15 13"><rect x="1.5" y="1.5" width="12" height="10" fill="none" stroke="#e0e0e0" stroke-width="1.2" stroke-dasharray="1.2 1"/><rect x="3.5" y="3.5" width="8" height="6" fill="none" stroke="#e8e8e8" stroke-width="1.1"/></svg><div style="left:479px;top:50px;width:1px;height:16px;background:#5e6062"></div><div style="left:484px;top:49px;width:95px;height:17px;background:#0f0f10;border:1px solid #2a2b2c"></div><div class="t" style="left:484.0px;top:53px;width:95px;text-align:center;font-size:10px;color:#9a9a9a">Override Width</div><div style="left:584px;top:49px;width:95px;height:17px;background:#0f0f10;border:1px solid #2a2b2c"></div><div class="t" style="left:584.0px;top:53px;width:95px;text-align:center;font-size:10px;color:#9a9a9a">Override Height</div><svg style="left:891px;top:51px;" width="12" height="12" viewBox="0 0 12 12"><rect x="0" y="0" width="12" height="12" fill="#000"/><rect x="1.5" y="1.5" width="5" height="5" fill="#fff"/><rect x="6.5" y="6.5" width="4" height="4" fill="#fff"/></svg><svg style="left:907px;top:53px;" width="7" height="10" viewBox="0 0 7 10"><path d="M0 4 L3.5 0 L7 4Z M0 6 L3.5 10 L7 6Z" fill="#cfcfcf"/></svg><div class="t" style="left:930px;top:51px;font-size:13px;color:#f0f0f0">100 %</div><svg style="left:1020px;top:53px;" width="7" height="10" viewBox="0 0 7 10"><path d="M0 4 L3.5 0 L7 4Z M0 6 L3.5 10 L7 6Z" fill="#cfcfcf"/></svg><svg style="left:1040px;top:52px;" width="13" height="12" viewBox="0 0 13 12"><path d="M5.5 1.2 A5 5 0 1 1 1.3 4" fill="none" stroke="#c0c0c0" stroke-width="1.2"/><path d="M2.2 1.2 L6.2 -1 V3.6Z" fill="#c0c0c0"/></svg><div style="left:1059px;top:45px;width:12px;height:25px;background:#4a4b4d"></div><div style="left:365px;top:70px;width:706px;height:378px;background:#4f5052"></div><div style="left:1048px;top:75px;width:10px;height:370px;background:#444547"></div><div style="left:370px;top:448px;width:675px;height:10px;background:#444547"></div><div style="left:700px;top:448px;width:56px;height:10px;background:#505153"></div><svg style="left:1048px;top:448px;" width="10" height="10" viewBox="0 0 10 10"><path d="M0.5 10 V0.5 H10" fill="none" stroke="#d8d8d8"/></svg><div style="left:365px;top:458px;width:695px;height:2px;background:#3c3d3f"></div><div style="left:387px;top:100px;width:641px;height:321px;background:#646464"></div><div style="left:404.0px;top:149.0px;width:181px;height:181px;border-radius:50%;background:linear-gradient(180deg,#c2c2c2 0%,#a8a8a8 28%,#8f8f8f 52%,#999999 78%,#adadad 100%);box-shadow:0 1px 3px rgba(0,0,0,0.35), inset 0 -1px 1px rgba(255,255,255,0.35)"></div><div style="left:404.0px;top:149.0px;width:181px;height:181px;border-radius:50%;background:radial-gradient(circle, rgba(0,0,0,0) 80%, rgba(0,0,0,0.10) 100%)"></div><div style="left:423.5px;top:168.5px;width:142px;height:142px;border-radius:50%;box-shadow:0 0 4px rgba(0,0,0,0.25)"></div><div style="left:423.5px;top:168.5px;width:142px;height:142px;border-radius:50%;background:radial-gradient(circle at 50% 30%,#fbfbfb 0%,#f1f1f1 50%,#e4e4e4 100%)"></div><svg style="left:404.5px;top:149.5px;" width="180" height="180" viewBox="0 0 180 180"><circle cx="121.0" cy="36.906424965364785" r="2.5" fill="#c8c8c8" opacity="0.7"/><circle cx="121.0" cy="36.30642496536478" r="2.4" fill="#f8f8f8"/><circle cx="143.69357503463516" cy="59.6" r="2.5" fill="#c8c8c8" opacity="0.7"/><circle cx="143.69357503463516" cy="59.0" r="2.4" fill="#f8f8f8"/><circle cx="152.0" cy="90.6" r="2.5" fill="#c8c8c8" opacity="0.7"/><circle cx="152.0" cy="90.0" r="2.4" fill="#f8f8f8"/><circle cx="143.69357503463516" cy="121.6" r="2.5" fill="#c8c8c8" opacity="0.7"/><circle cx="143.69357503463516" cy="121.0" r="2.4" fill="#f8f8f8"/><circle cx="121.0" cy="144.2935750346352" r="2.5" fill="#c8c8c8" opacity="0.7"/><circle cx="121.0" cy="143.69357503463522" r="2.4" fill="#f8f8f8"/><circle cx="90.0" cy="152.6" r="2.5" fill="#c8c8c8" opacity="0.7"/><circle cx="90.0" cy="152.0" r="2.4" fill="#f8f8f8"/><circle cx="59.0" cy="144.2935750346352" r="2.5" fill="#c8c8c8" opacity="0.7"/><circle cx="59.0" cy="143.69357503463522" r="2.4" fill="#f8f8f8"/><circle cx="36.30642496536484" cy="121.6" r="2.5" fill="#c8c8c8" opacity="0.7"/><circle cx="36.30642496536484" cy="121.0" r="2.4" fill="#f8f8f8"/><circle cx="28.0" cy="90.6" r="2.5" fill="#c8c8c8" opacity="0.7"/><circle cx="28.0" cy="90.0" r="2.4" fill="#f8f8f8"/><circle cx="36.30642496536478" cy="59.6" r="2.5" fill="#c8c8c8" opacity="0.7"/><circle cx="36.30642496536478" cy="59.0" r="2.4" fill="#f8f8f8"/><circle cx="59.0" cy="36.90642496536481" r="2.5" fill="#c8c8c8" opacity="0.7"/><circle cx="59.0" cy="36.30642496536481" r="2.4" fill="#f8f8f8"/></svg><div style="left:489.5px;top:158.5px;width:10px;height:82px;border-radius:4px;background:rgba(0,0,0,0.12)"></div><div style="left:490.5px;top:159.5px;width:8px;height:80px;border-radius:3px;background:linear-gradient(90deg,#bdbdbd,#f2f2f2 35%,#e6e6e6 65%,#a8a8a8)"></div><div style="left:493.8px;top:162.5px;width:1.4px;height:74px;background:#c8584e"></div><div style="left:487.5px;top:232.5px;width:14px;height:14px;border-radius:50%;background:radial-gradient(circle at 50% 35%,#fdfdfd,#dcdcdc);box-shadow:0 1px 2px rgba(0,0,0,0.35)"></div><div class="t" style="left:394.5px;top:349.0px;width:200px;text-align:center;font-size:16px;font-weight:bold;color:#f4f4f4;text-shadow:0 1px 1px #333">New York</div><div style="left:617.5px;top:149.0px;width:181px;height:181px;border-radius:50%;background:linear-gradient(180deg,#c2c2c2 0%,#a8a8a8 28%,#8f8f8f 52%,#999999 78%,#adadad 100%);box-shadow:0 1px 3px rgba(0,0,0,0.35), inset 0 -1px 1px rgba(255,255,255,0.35)"></div><div style="left:617.5px;top:149.0px;width:181px;height:181px;border-radius:50%;background:radial-gradient(circle, rgba(0,0,0,0) 80%, rgba(0,0,0,0.10) 100%)"></div><div style="left:637px;top:168.5px;width:142px;height:142px;border-radius:50%;box-shadow:0 0 4px rgba(0,0,0,0.25)"></div><div style="left:637px;top:168.5px;width:142px;height:142px;border-radius:50%;background:radial-gradient(circle at 50% 30%,#fbfbfb 0%,#f1f1f1 50%,#e4e4e4 100%)"></div><svg style="left:618px;top:149.5px;" width="180" height="180" viewBox="0 0 180 180"><circle cx="121.0" cy="36.906424965364785" r="2.5" fill="#c8c8c8" opacity="0.7"/><circle cx="121.0" cy="36.30642496536478" r="2.4" fill="#f8f8f8"/><circle cx="143.69357503463516" cy="59.6" r="2.5" fill="#c8c8c8" opacity="0.7"/><circle cx="143.69357503463516" cy="59.0" r="2.4" fill="#f8f8f8"/><circle cx="152.0" cy="90.6" r="2.5" fill="#c8c8c8" opacity="0.7"/><circle cx="152.0" cy="90.0" r="2.4" fill="#f8f8f8"/><circle cx="143.69357503463516" cy="121.6" r="2.5" fill="#c8c8c8" opacity="0.7"/><circle cx="143.69357503463516" cy="121.0" r="2.4" fill="#f8f8f8"/><circle cx="121.0" cy="144.2935750346352" r="2.5" fill="#c8c8c8" opacity="0.7"/><circle cx="121.0" cy="143.69357503463522" r="2.4" fill="#f8f8f8"/><circle cx="90.0" cy="152.6" r="2.5" fill="#c8c8c8" opacity="0.7"/><circle cx="90.0" cy="152.0" r="2.4" fill="#f8f8f8"/><circle cx="59.0" cy="144.2935750346352" r="2.5" fill="#c8c8c8" opacity="0.7"/><circle cx="59.0" cy="143.69357503463522" r="2.4" fill="#f8f8f8"/><circle cx="36.30642496536484" cy="121.6" r="2.5" fill="#c8c8c8" opacity="0.7"/><circle cx="36.30642496536484" cy="121.0" r="2.4" fill="#f8f8f8"/><circle cx="28.0" cy="90.6" r="2.5" fill="#c8c8c8" opacity="0.7"/><circle cx="28.0" cy="90.0" r="2.4" fill="#f8f8f8"/><circle cx="36.30642496536484" cy="59.6" r="2.5" fill="#c8c8c8" opacity="0.7"/><circle cx="36.30642496536484" cy="59.0" r="2.4" fill="#f8f8f8"/><circle cx="59.0" cy="36.90642496536481" r="2.5" fill="#c8c8c8" opacity="0.7"/><circle cx="59.0" cy="36.30642496536481" r="2.4" fill="#f8f8f8"/></svg><div style="left:703px;top:158.5px;width:10px;height:82px;border-radius:4px;background:rgba(0,0,0,0.12)"></div><div style="left:704px;top:159.5px;width:8px;height:80px;border-radius:3px;background:linear-gradient(90deg,#bdbdbd,#f2f2f2 35%,#e6e6e6 65%,#a8a8a8)"></div><div style="left:707.3px;top:162.5px;width:1.4px;height:74px;background:#c8584e"></div><div style="left:701px;top:232.5px;width:14px;height:14px;border-radius:50%;background:radial-gradient(circle at 50% 35%,#fdfdfd,#dcdcdc);box-shadow:0 1px 2px rgba(0,0,0,0.35)"></div><div class="t" style="left:608.0px;top:349.0px;width:200px;text-align:center;font-size:16px;font-weight:bold;color:#f4f4f4;text-shadow:0 1px 1px #333">London</div><div style="left:831.0px;top:149.0px;width:181px;height:181px;border-radius:50%;background:linear-gradient(180deg,#c2c2c2 0%,#a8a8a8 28%,#8f8f8f 52%,#999999 78%,#adadad 100%);box-shadow:0 1px 3px rgba(0,0,0,0.35), inset 0 -1px 1px rgba(255,255,255,0.35)"></div><div style="left:831.0px;top:149.0px;width:181px;height:181px;border-radius:50%;background:radial-gradient(circle, rgba(0,0,0,0) 80%, rgba(0,0,0,0.10) 100%)"></div><div style="left:850.5px;top:168.5px;width:142px;height:142px;border-radius:50%;box-shadow:0 0 4px rgba(0,0,0,0.25)"></div><div style="left:850.5px;top:168.5px;width:142px;height:142px;border-radius:50%;background:radial-gradient(circle at 50% 30%,#fbfbfb 0%,#f1f1f1 50%,#e4e4e4 100%)"></div><svg style="left:831.5px;top:149.5px;" width="180" height="180" viewBox="0 0 180 180"><circle cx="121.0" cy="36.906424965364785" r="2.5" fill="#c8c8c8" opacity="0.7"/><circle cx="121.0" cy="36.30642496536478" r="2.4" fill="#f8f8f8"/><circle cx="143.69357503463516" cy="59.6" r="2.5" fill="#c8c8c8" opacity="0.7"/><circle cx="143.69357503463516" cy="59.0" r="2.4" fill="#f8f8f8"/><circle cx="152.0" cy="90.6" r="2.5" fill="#c8c8c8" opacity="0.7"/><circle cx="152.0" cy="90.0" r="2.4" fill="#f8f8f8"/><circle cx="143.69357503463516" cy="121.6" r="2.5" fill="#c8c8c8" opacity="0.7"/><circle cx="143.69357503463516" cy="121.0" r="2.4" fill="#f8f8f8"/><circle cx="121.0" cy="144.2935750346352" r="2.5" fill="#c8c8c8" opacity="0.7"/><circle cx="121.0" cy="143.69357503463522" r="2.4" fill="#f8f8f8"/><circle cx="90.0" cy="152.6" r="2.5" fill="#c8c8c8" opacity="0.7"/><circle cx="90.0" cy="152.0" r="2.4" fill="#f8f8f8"/><circle cx="59.0" cy="144.2935750346352" r="2.5" fill="#c8c8c8" opacity="0.7"/><circle cx="59.0" cy="143.69357503463522" r="2.4" fill="#f8f8f8"/><circle cx="36.30642496536484" cy="121.6" r="2.5" fill="#c8c8c8" opacity="0.7"/><circle cx="36.30642496536484" cy="121.0" r="2.4" fill="#f8f8f8"/><circle cx="28.0" cy="90.6" r="2.5" fill="#c8c8c8" opacity="0.7"/><circle cx="28.0" cy="90.0" r="2.4" fill="#f8f8f8"/><circle cx="36.30642496536484" cy="59.6" r="2.5" fill="#c8c8c8" opacity="0.7"/><circle cx="36.30642496536484" cy="59.0" r="2.4" fill="#f8f8f8"/><circle cx="59.0" cy="36.90642496536481" r="2.5" fill="#c8c8c8" opacity="0.7"/><circle cx="59.0" cy="36.30642496536481" r="2.4" fill="#f8f8f8"/></svg><div style="left:916.5px;top:158.5px;width:10px;height:82px;border-radius:4px;background:rgba(0,0,0,0.12)"></div><div style="left:917.5px;top:159.5px;width:8px;height:80px;border-radius:3px;background:linear-gradient(90deg,#bdbdbd,#f2f2f2 35%,#e6e6e6 65%,#a8a8a8)"></div><div style="left:920.8px;top:162.5px;width:1.4px;height:74px;background:#c8584e"></div><div style="left:914.5px;top:232.5px;width:14px;height:14px;border-radius:50%;background:radial-gradient(circle at 50% 35%,#fdfdfd,#dcdcdc);box-shadow:0 1px 2px rgba(0,0,0,0.35)"></div><div class="t" style="left:821.5px;top:349.0px;width:200px;text-align:center;font-size:16px;font-weight:bold;color:#f4f4f4;text-shadow:0 1px 1px #333">Oslo</div><div style="left:1044px;top:186px;width:4px;height:110px;overflow:hidden"><div style="left:0;top:-36px;width:181px;height:181px;border-radius:50%;background:linear-gradient(180deg,#727272,#5e5e5e)"></div></div><svg style="left:997px;top:391px;" width="18" height="16" viewBox="0 0 18 16"><path d="M1 5 H8 V1 L16 8 L8 15 V11 H1Z" fill="#8a9a2a" stroke="#3a3a1a" stroke-width="0.8"/></svg><div style="left:387px;top:99px;width:641px;height:2px;background:#4aa3f5"></div><div style="left:387px;top:419px;width:641px;height:2px;background:#4aa3f5"></div><div style="left:386px;top:99px;width:2px;height:322px;background:#4aa3f5"></div><div style="left:1026px;top:99px;width:2px;height:322px;background:#4aa3f5"></div><div style="left:385.5px;top:83px;width:71px;height:17px;background:#4aa3f5;border-radius:2px 2px 0 0"></div><div class="t" style="left:391px;top:84px;font-size:13.7px;color:#ffffff">clockview</div><div style="left:1031px;top:100px;width:18px;height:0;border-top:1px dotted #8a8a8a"></div><div style="left:387px;top:423px;width:0;height:24px;border-left:1px dotted #8a8a8a"></div><div style="left:384.5px;top:97.5px;width:6px;height:6px;background:#fff;border:1px solid #4aa3f5"></div><div style="left:703px;top:95px;width:8px;height:5px;border-radius:4px 4px 0 0;background:#0000ff"></div><div style="left:704.5px;top:97.5px;width:6px;height:6px;background:#fff;border:1px solid #4aa3f5"></div><div style="left:1024.5px;top:97.5px;width:6px;height:6px;background:#fff;border:1px solid #4aa3f5"></div><div style="left:382px;top:256px;width:5px;height:8px;border-radius:4px 0 0 4px;background:#0000ff"></div><div style="left:384.5px;top:257.5px;width:6px;height:6px;background:#fff;border:1px solid #4aa3f5"></div><div style="left:1027px;top:256px;width:5px;height:8px;border-radius:0 4px 4px 0;background:#0000ff"></div><div style="left:1024.5px;top:257.5px;width:6px;height:6px;background:#fff;border:1px solid #4aa3f5"></div><div style="left:384.5px;top:417.5px;width:6px;height:6px;background:#fff;border:1px solid #4aa3f5"></div><div style="left:703px;top:420px;width:8px;height:5px;border-radius:0 0 4px 4px;background:#0000ff"></div><div style="left:704.5px;top:417.5px;width:6px;height:6px;background:#fff;border:1px solid #4aa3f5"></div><div style="left:1024.5px;top:417.5px;width:6px;height:6px;background:#fff;border:1px solid #4aa3f5"></div><div style="left:365px;top:460px;width:685px;height:395px;background:#ffffff"></div><div style="left:365px;top:460px;width:54px;height:395px;background:#e8e8e8"></div><div style="left:365px;top:460px;width:1px;height:395px;background:#fafafa"></div><div style="left:419px;top:604px;width:631px;height:16px;background:#e8f1fc"></div><div style="left:1050px;top:460px;width:10px;height:413px;background:#404244"></div><div style="left:1060px;top:458px;width:11px;height:159px;background:#4f5052"></div><div style="left:1060px;top:617px;width:11px;height:200px;background:#404244"></div><div style="left:1053px;top:540px;width:5px;height:4px;background:#3e3f41"></div><div style="left:1050px;top:466px;width:10px;height:193px;background:#5a5b5d"></div><div style="left:1050px;top:460px;width:10px;height:3px;background:#fff"></div><div style="left:1050px;top:463px;width:10px;height:3px;background:#3a3b3d"></div><div style="left:1050px;top:852px;width:10px;height:3px;background:#f4f4f4"></div><div style="left:1060px;top:817px;width:11px;height:56px;background:#4f5052"></div><div style="left:1071px;top:22px;width:1px;height:892px;background:#2e2f30"></div><div style="left:365px;top:460px;width:685px;height:395px;overflow:hidden"><div style="left:0;top:1px;width:685px;height:420px"><div class="code" style="left:0;top:0px;width:33px;text-align:right;color:#a8a8a8;font-weight:normal">40</div><div class="code" style="left:58px;top:0px"></div><div class="code" style="left:0;top:16px;width:33px;text-align:right;color:#a8a8a8;font-weight:normal">41</div><div class="code" style="left:58px;top:16px"><span style="color:#808000">import</span><span class="ws"> </span><span style="color:#000000">QtQuick</span><span class="ws"> </span><span style="color:#000000">2.0</span></div><div class="code" style="left:0;top:32px;width:33px;text-align:right;color:#a8a8a8;font-weight:normal">42</div><div class="code" style="left:58px;top:32px"><span style="color:#808000">import</span><span class="ws"> </span><span style="color:#008000">&quot;content&quot;</span><span class="ws"> </span><span style="color:#000000">as</span><span class="ws"> </span><span style="color:#800080">Content</span></div><div class="code" style="left:0;top:48px;width:33px;text-align:right;color:#a8a8a8;font-weight:normal">43</div><div class="code" style="left:58px;top:48px"></div><div class="code" style="left:0;top:64px;width:33px;text-align:right;color:#a8a8a8;font-weight:normal">44</div><div class="code" style="left:58px;top:64px"><span style="color:#800080">Rectangle</span><span class="ws"> </span><span style="color:#000000">{</span></div><div class="code" style="left:0;top:80px;width:33px;text-align:right;color:#a8a8a8;font-weight:normal">45</div><div class="code" style="left:58px;top:80px"><span class="ws">    </span><span style="color:#800000">id</span><span style="color:#000000">:</span><span class="ws"> </span><span style="font-style:italic">root</span></div><div class="code" style="left:0;top:96px;width:33px;text-align:right;color:#a8a8a8;font-weight:normal">46</div><div class="code" style="left:58px;top:96px"><span class="ws">    </span><span style="color:#800000">width</span><span style="color:#000000">:</span><span class="ws"> </span><span style="color:#000000">640;</span><span class="ws"> </span><span style="color:#800000">height</span><span style="color:#000000">:</span><span class="ws"> </span><span style="color:#000000">320</span></div><div class="code" style="left:0;top:112px;width:33px;text-align:right;color:#a8a8a8;font-weight:normal">47</div><div class="code" style="left:58px;top:112px"><span class="ws">    </span><span style="color:#800000">color</span><span style="color:#000000">:</span><span class="ws"> </span><span style="color:#008000">&quot;#646464&quot;</span></div><div class="code" style="left:0;top:128px;width:33px;text-align:right;color:#a8a8a8;font-weight:normal">48</div><div class="code" style="left:58px;top:128px"></div><div class="code" style="left:0;top:144px;width:33px;text-align:right;color:#4a4a4a;font-weight:bold">49</div><div class="code" style="left:58px;top:144px"><span class="ws">    </span><span style="color:#800080">ListView</span><span class="ws"> </span><span style="color:#000000">{</span></div><div class="code" style="left:0;top:160px;width:33px;text-align:right;color:#a8a8a8;font-weight:normal">50</div><div class="code" style="left:58px;top:160px"><span class="ws">        </span><span style="color:#800000">id</span><span style="color:#000000">:</span><span class="ws"> </span><span style="font-style:italic">clockview</span></div><div class="code" style="left:0;top:176px;width:33px;text-align:right;color:#a8a8a8;font-weight:normal">51</div><div class="code" style="left:58px;top:176px"><span class="ws">        </span><span style="color:#800000">anchors.fill</span><span style="color:#000000">:</span><span class="ws"> </span><span style="font-style:italic">parent</span></div><div class="code" style="left:0;top:192px;width:33px;text-align:right;color:#a8a8a8;font-weight:normal">52</div><div class="code" style="left:58px;top:192px"><span class="ws">        </span><span style="color:#800000">orientation</span><span style="color:#000000">:</span><span class="ws"> </span><span style="color:#800080">ListView</span><span style="color:#000000">.Horizontal</span></div><div class="code" style="left:0;top:208px;width:33px;text-align:right;color:#a8a8a8;font-weight:normal">53</div><div class="code" style="left:58px;top:208px"><span class="ws">        </span><span style="color:#800000">cacheBuffer</span><span style="color:#000000">:</span><span class="ws"> </span><span style="color:#000000">2000</span></div><div class="code" style="left:0;top:224px;width:33px;text-align:right;color:#a8a8a8;font-weight:normal">54</div><div class="code" style="left:58px;top:224px"><span class="ws">        </span><span style="color:#800000">snapMode</span><span style="color:#000000">:</span><span class="ws"> </span><span style="color:#800080">ListView</span><span style="color:#000000">.SnapOneItem</span></div><div class="code" style="left:0;top:240px;width:33px;text-align:right;color:#a8a8a8;font-weight:normal">55</div><div class="code" style="left:58px;top:240px"><span class="ws">        </span><span style="color:#800000">highlightRangeMode</span><span style="color:#000000">:</span><span class="ws"> </span><span style="color:#800080">ListView</span><span style="color:#000000">.ApplyRange</span></div><div class="code" style="left:0;top:256px;width:33px;text-align:right;color:#a8a8a8;font-weight:normal">56</div><div class="code" style="left:58px;top:256px"></div><div class="code" style="left:0;top:272px;width:33px;text-align:right;color:#a8a8a8;font-weight:normal">57</div><div class="code" style="left:58px;top:272px"><span class="ws">        </span><span style="color:#800000">delegate</span><span style="color:#000000">:</span><span class="ws"> </span><span style="color:#800080">Content.Clock</span><span class="ws"> </span><span style="color:#000000">{</span><span class="ws"> </span><span style="color:#800000">city</span><span style="color:#000000">:</span><span class="ws"> </span><span style="color:#000000">cityName;</span><span class="ws"> </span><span style="color:#800000">shift</span><span style="color:#000000">:</span><span class="ws"> </span><span style="color:#000000">timeShift</span><span class="ws"> </span><span style="color:#000000">}</span></div><div class="code" style="left:0;top:288px;width:33px;text-align:right;color:#a8a8a8;font-weight:normal">58</div><div class="code" style="left:58px;top:288px"><span class="ws">        </span><span style="color:#800000">model</span><span style="color:#000000">:</span><span class="ws"> </span><span style="color:#800080">ListModel</span><span class="ws"> </span><span style="color:#000000">{</span></div><div class="code" style="left:0;top:304px;width:33px;text-align:right;color:#a8a8a8;font-weight:normal">59</div><div class="code" style="left:58px;top:304px"><span class="ws">            </span><span style="color:#800080">ListElement</span><span class="ws"> </span><span style="color:#000000">{</span><span class="ws"> </span><span style="color:#800000">cityName</span><span style="color:#000000">:</span><span class="ws"> </span><span style="color:#008000">&quot;New<span class="ws"> </span>York&quot;</span><span style="color:#000000">;</span><span class="ws"> </span><span style="color:#800000">timeShift</span><span style="color:#000000">:</span><span class="ws"> </span><span style="color:#000000">-4</span><span class="ws"> </span><span style="color:#000000">}</span></div><div class="code" style="left:0;top:320px;width:33px;text-align:right;color:#a8a8a8;font-weight:normal">60</div><div class="code" style="left:58px;top:320px"><span class="ws">            </span><span style="color:#800080">ListElement</span><span class="ws"> </span><span style="color:#000000">{</span><span class="ws"> </span><span style="color:#800000">cityName</span><span style="color:#000000">:</span><span class="ws"> </span><span style="color:#008000">&quot;London&quot;</span><span style="color:#000000">;</span><span class="ws"> </span><span style="color:#800000">timeShift</span><span style="color:#000000">:</span><span class="ws"> </span><span style="color:#000000">0</span><span class="ws"> </span><span style="color:#000000">}</span></div><div class="code" style="left:0;top:336px;width:33px;text-align:right;color:#a8a8a8;font-weight:normal">61</div><div class="code" style="left:58px;top:336px"><span class="ws">            </span><span style="color:#800080">ListElement</span><span class="ws"> </span><span style="color:#000000">{</span><span class="ws"> </span><span style="color:#800000">cityName</span><span style="color:#000000">:</span><span class="ws"> </span><span style="color:#008000">&quot;Oslo&quot;</span><span style="color:#000000">;</span><span class="ws"> </span><span style="color:#800000">timeShift</span><span style="color:#000000">:</span><span class="ws"> </span><span style="color:#000000">1</span><span class="ws"> </span><span style="color:#000000">}</span></div><div class="code" style="left:0;top:352px;width:33px;text-align:right;color:#a8a8a8;font-weight:normal">62</div><div class="code" style="left:58px;top:352px"><span class="ws">            </span><span style="color:#800080">ListElement</span><span class="ws"> </span><span style="color:#000000">{</span><span class="ws"> </span><span style="color:#800000">cityName</span><span style="color:#000000">:</span><span class="ws"> </span><span style="color:#008000">&quot;Mumbai&quot;</span><span style="color:#000000">;</span><span class="ws"> </span><span style="color:#800000">timeShift</span><span style="color:#000000">:</span><span class="ws"> </span><span style="color:#000000">5.5</span><span class="ws"> </span><span style="color:#000000">}</span></div><div class="code" style="left:0;top:368px;width:33px;text-align:right;color:#a8a8a8;font-weight:normal">63</div><div class="code" style="left:58px;top:368px"><span class="ws">            </span><span style="color:#800080">ListElement</span><span class="ws"> </span><span style="color:#000000">{</span><span class="ws"> </span><span style="color:#800000">cityName</span><span style="color:#000000">:</span><span class="ws"> </span><span style="color:#008000">&quot;Tokyo&quot;</span><span style="color:#000000">;</span><span class="ws"> </span><span style="color:#800000">timeShift</span><span style="color:#000000">:</span><span class="ws"> </span><span style="color:#000000">9</span><span class="ws"> </span><span style="color:#000000">}</span></div><div class="code" style="left:0;top:384px;width:33px;text-align:right;color:#a8a8a8;font-weight:normal">64</div><div class="code" style="left:58px;top:384px"><span class="ws">            </span><span style="color:#800080">ListElement</span><span class="ws"> </span><span style="color:#000000">{</span><span class="ws"> </span><span style="color:#800000">cityName</span><span style="color:#000000">:</span><span class="ws"> </span><span style="color:#008000">&quot;Brisbane&quot;</span><span style="color:#000000">;</span><span class="ws"> </span><span style="color:#800000">timeShift</span><span style="color:#000000">:</span><span class="ws"> </span><span style="color:#000000">10</span><span class="ws"> </span><span style="color:#000000">}</span></div><svg style="left:42px;top:68px;" width="9" height="8" viewBox="0 0 9 8"><path d="M0 0 H9 L4.5 8Z" fill="#808080"/></svg><svg style="left:42px;top:148px;" width="9" height="8" viewBox="0 0 9 8"><path d="M0 0 H9 L4.5 8Z" fill="#808080"/></svg><svg style="left:42px;top:292px;" width="9" height="8" viewBox="0 0 9 8"><path d="M0 0 H9 L4.5 8Z" fill="#808080"/></svg></div></div><div style="left:473px;top:604px;width:2px;height:16px;background:#000"></div><div style="left:365px;top:855px;width:706px;height:18px;background:#404244"></div><div style="left:365px;top:873px;width:706px;height:41px;background:#4f5052"></div><div style="left:365px;top:873px;width:695px;height:1px;background:#333436"></div><div style="left:367px;top:876px;width:144px;height:37px;background:#46a2da;border:1px solid #2c5a78"></div><div class="t" style="left:393px;top:886px;font-size:10px;color:#ffffff">base state</div><div style="left:1045px;top:884px;width:19px;height:18px;background:#404244;border:1px solid #2a2b2c"></div><svg style="left:1047px;top:886px;" width="15" height="14" viewBox="0 0 15 14"><path d="M7.5 2 V12 M2.5 7 H12.5" stroke="#dcdcdc" stroke-width="1.6"/></svg><div class="t" style="left:1058px;top:634px;width:14px;height:66px;"><div class="t" style="left:14px;top:0;transform-origin:0 0;transform:rotate(90deg);font-size:11.6px;font-weight:bold;color:#f0f0f0">Form Editor</div></div><div class="t" style="left:1058px;top:737px;width:14px;height:62px;"><div class="t" style="left:14px;top:0;transform-origin:0 0;transform:rotate(90deg);font-size:11.8px;font-weight:bold;color:#f0f0f0">Text Editor</div></div><svg style="left:1062px;top:833px;" width="7" height="7" viewBox="0 0 7 7"><rect x="0.5" y="0.5" width="6" height="6" fill="none" stroke="#000"/><path d="M1 3.5h5" stroke="#000"/></svg><svg style="left:1062px;top:860px;" width="7" height="7" viewBox="0 0 7 7"><rect x="0.5" y="0.5" width="6" height="6" fill="none" stroke="#000"/><path d="M3.5 1v5" stroke="#000"/></svg><div style="left:1072px;top:22px;width:327px;height:23px;background:#404244"></div><div class="t" style="left:1083px;top:27px;font-size:13.8px;color:#eeeeee">Properties</div><svg style="left:1264px;top:29px;" width="7" height="10" viewBox="0 0 7 10"><path d="M0 4 L3.5 0 L7 4Z M0 6 L3.5 10 L7 6Z" fill="#d0d0d0"/></svg><div style="left:1276px;top:27px;width:1px;height:14px;background:#666"></div><svg style="left:1353px;top:28px;" width="14" height="12" viewBox="0 0 14 12"><path d="M0.5 0.5h7v10h-7z M0.5 5.5h7" fill="none" stroke="#d0d0d0"/><path d="M9 5.5h5M11.5 3v5" stroke="#d0d0d0"/></svg><svg style="left:1380px;top:29px;" width="12" height="11" viewBox="0 0 12 11"><rect x="0.5" y="1.5" width="11" height="9" fill="none" stroke="#d0d0d0"/><path d="M0.5 3.5h11" stroke="#d0d0d0"/><path d="M4 5.5 L8 5.5 L6 7.5Z" fill="#d0d0d0"/></svg><div style="left:1072px;top:45px;width:327px;height:386px;background:#4f5052"></div><div style="left:1389px;top:45px;width:10px;height:386px;background:#444547"></div><div style="left:1389px;top:46px;width:10px;height:173px;background:#5a5b5d"></div><div style="left:1072px;top:45px;width:317px;height:18px;background:#3e4042"></div><svg style="left:1076px;top:52px;" width="8" height="5" viewBox="0 0 8 5"><path d="M0 0 L8 0 L4 5Z" fill="#c8c8c8"/></svg><div class="t" style="left:1094px;top:48px;font-size:13.6px;font-weight:bold;color:#f4f4f4">Type</div><div class="t" style="left:1080px;top:73px;font-size:13.5px;color:#f4f4f4">Type</div><div style="left:1175px;top:67px;width:188px;height:24px;background:#58595b;border:1px solid #2f3032"></div><div class="t" style="left:1191px;top:73px;font-size:13.5px;color:#f4f4f4">ListView</div><div class="t" style="left:1080px;top:101px;font-size:13.5px;color:#f4f4f4">id</div><div style="left:1175px;top:95px;width:188px;height:24px;background:#272829"></div><div class="t" style="left:1191px;top:101px;font-size:13.5px;color:#f4f4f4">clockview</div><svg style="left:1369px;top:101px;" width="12" height="12" viewBox="0 0 12 12"><rect x="0.5" y="0.5" width="11" height="11" fill="none" stroke="#c8c8c8"/><path d="M3 3.5h4M3 6h4M3 8.5h4" stroke="#c8c8c8" stroke-width="0.8"/></svg><div style="left:1072px;top:123px;width:317px;height:18px;background:#3e4042"></div><svg style="left:1076px;top:130px;" width="8" height="5" viewBox="0 0 8 5"><path d="M0 0 L8 0 L4 5Z" fill="#c8c8c8"/></svg><div class="t" style="left:1094px;top:126px;font-size:13.6px;font-weight:bold;color:#f4f4f4">Geometry</div><div class="t" style="left:1080px;top:151px;font-size:13.5px;color:#f4f4f4">Position</div><div class="t" style="left:1175px;top:151px;font-size:13.5px;color:#f4f4f4">X</div><div style="left:1191px;top:145px;width:64px;height:24px;background:#2b2c2d"></div><svg style="left:1197px;top:154px;" width="6" height="6" viewBox="0 0 6 6"><circle cx="3" cy="3" r="2.2" fill="none" stroke="#c8c8c8" stroke-width="0.9"/></svg><div class="t" style="left:1191px;top:151px;width:46px;text-align:right;font-size:13.5px;color:#f0f0f0">0</div><svg style="left:1242px;top:150px;" width="9" height="14" viewBox="0 0 9 14"><path d="M0.5 5 L4.5 1 L8.5 5Z M0.5 9 L4.5 13 L8.5 9Z" fill="#c8c8c8"/></svg><div class="t" style="left:1267px;top:151px;font-size:13.5px;color:#f4f4f4">Y</div><div style="left:1283px;top:145px;width:64px;height:24px;background:#2b2c2d"></div><svg style="left:1289px;top:154px;" width="6" height="6" viewBox="0 0 6 6"><circle cx="3" cy="3" r="2.2" fill="none" stroke="#c8c8c8" stroke-width="0.9"/></svg><div class="t" style="left:1283px;top:151px;width:46px;text-align:right;font-size:13.5px;color:#f0f0f0">0</div><svg style="left:1334px;top:150px;" width="9" height="14" viewBox="0 0 9 14"><path d="M0.5 5 L4.5 1 L8.5 5Z M0.5 9 L4.5 13 L8.5 9Z" fill="#c8c8c8"/></svg><div class="t" style="left:1080px;top:179px;font-size:13.5px;color:#f4f4f4">Size</div><div class="t" style="left:1175px;top:179px;font-size:13.5px;color:#f4f4f4">W</div><div style="left:1191px;top:173px;width:64px;height:24px;background:#2b2c2d"></div><svg style="left:1197px;top:182px;" width="6" height="6" viewBox="0 0 6 6"><circle cx="3" cy="3" r="2.2" fill="none" stroke="#c8c8c8" stroke-width="0.9"/></svg><div class="t" style="left:1191px;top:179px;width:46px;text-align:right;font-size:13.5px;color:#f0f0f0">640</div><svg style="left:1242px;top:178px;" width="9" height="14" viewBox="0 0 9 14"><path d="M0.5 5 L4.5 1 L8.5 5Z M0.5 9 L4.5 13 L8.5 9Z" fill="#c8c8c8"/></svg><div class="t" style="left:1267px;top:179px;font-size:13.5px;color:#f4f4f4">H</div><div style="left:1283px;top:173px;width:64px;height:24px;background:#2b2c2d"></div><svg style="left:1289px;top:182px;" width="6" height="6" viewBox="0 0 6 6"><circle cx="3" cy="3" r="2.2" fill="none" stroke="#c8c8c8" stroke-width="0.9"/></svg><div class="t" style="left:1283px;top:179px;width:46px;text-align:right;font-size:13.5px;color:#f0f0f0">320</div><svg style="left:1334px;top:178px;" width="9" height="14" viewBox="0 0 9 14"><path d="M0.5 5 L4.5 1 L8.5 5Z M0.5 9 L4.5 13 L8.5 9Z" fill="#c8c8c8"/></svg><div style="left:1072px;top:201px;width:317px;height:18px;background:#3e4042"></div><svg style="left:1076px;top:208px;" width="8" height="5" viewBox="0 0 8 5"><path d="M0 0 L8 0 L4 5Z" fill="#c8c8c8"/></svg><div class="t" style="left:1094px;top:204px;font-size:13.6px;font-weight:bold;color:#f4f4f4">Visibility</div><div class="t" style="left:1080px;top:225px;font-size:13.5px;color:#f4f4f4">Visibility</div><div style="left:1176px;top:224px;width:14px;height:14px;background:#2b2c2d"></div><svg style="left:1178px;top:226px;" width="10" height="10" viewBox="0 0 10 10"><path d="M1.2 5.2 L3.8 9.2 L9.5 0.8" fill="none" stroke="#e0e0e0" stroke-width="1.5"/></svg><svg style="left:1200px;top:228px;" width="6" height="6" viewBox="0 0 6 6"><circle cx="3" cy="3" r="2.2" fill="none" stroke="#c8c8c8" stroke-width="0.9"/></svg><div class="t" style="left:1215px;top:225px;font-size:13.5px;color:#f4f4f4">Is Visible</div><div style="left:1288px;top:224px;width:14px;height:14px;background:#2b2c2d"></div><svg style="left:1312px;top:228px;" width="6" height="6" viewBox="0 0 6 6"><circle cx="3" cy="3" r="2.2" fill="none" stroke="#c8c8c8" stroke-width="0.9"/></svg><div class="t" style="left:1327px;top:225px;font-size:13.5px;color:#f4f4f4">Clip</div><div class="t" style="left:1080px;top:249px;font-size:13.5px;color:#f4f4f4">Opacity</div><div style="left:1175px;top:244px;width:63px;height:23px;background:#2b2c2d"></div><svg style="left:1181px;top:252px;" width="6" height="6" viewBox="0 0 6 6"><circle cx="3" cy="3" r="2.2" fill="none" stroke="#c8c8c8" stroke-width="0.9"/></svg><div class="t" style="left:1195px;top:249px;font-size:13px;color:#f0f0f0">1.00</div><svg style="left:1225px;top:248px;" width="9" height="14" viewBox="0 0 9 14"><path d="M0.5 5 L4.5 1 L8.5 5Z M0.5 9 L4.5 13 L8.5 9Z" fill="#c8c8c8"/></svg><div style="left:1072px;top:275px;width:317px;height:23px;background:#404244"></div><div style="left:1072px;top:275px;width:111px;height:23px;background:#ffffff"></div><div style="left:1072px;top:298px;width:317px;height:5px;background:#ffffff"></div><div class="t" style="left:1071.5px;top:281px;width:111px;text-align:center;font-size:13px;font-weight:bold;color:#333">ListView</div><div class="t" style="left:1188.0px;top:281px;width:100px;text-align:center;font-size:13px;font-weight:bold;color:#f0f0f0">Layout</div><div class="t" style="left:1298.0px;top:281px;width:100px;text-align:center;font-size:13px;font-weight:bold;color:#f0f0f0">Advanced</div><div style="left:1072px;top:303px;width:317px;height:18px;background:#3e4042"></div><svg style="left:1076px;top:310px;" width="8" height="5" viewBox="0 0 8 5"><path d="M0 0 L8 0 L4 5Z" fill="#c8c8c8"/></svg><div class="t" style="left:1094px;top:306px;font-size:13.6px;font-weight:bold;color:#f4f4f4">Flickable</div><div class="t" style="left:1080px;top:331px;font-size:13.5px;color:#f4f4f4">Content size</div><div class="t" style="left:1175px;top:331px;font-size:13.5px;color:#f4f4f4">W</div><div style="left:1191px;top:325px;width:64px;height:24px;background:#2b2c2d"></div><svg style="left:1197px;top:334px;" width="6" height="6" viewBox="0 0 6 6"><circle cx="3" cy="3" r="2.2" fill="none" stroke="#c8c8c8" stroke-width="0.9"/></svg><div class="t" style="left:1191px;top:331px;width:46px;text-align:right;font-size:13.5px;color:#f0f0f0">1493</div><svg style="left:1242px;top:330px;" width="9" height="14" viewBox="0 0 9 14"><path d="M0.5 5 L4.5 1 L8.5 5Z M0.5 9 L4.5 13 L8.5 9Z" fill="#c8c8c8"/></svg><div class="t" style="left:1259px;top:331px;font-size:13.5px;color:#f4f4f4">H</div><div style="left:1275px;top:325px;width:64px;height:24px;background:#2b2c2d"></div><svg style="left:1281px;top:334px;" width="6" height="6" viewBox="0 0 6 6"><circle cx="3" cy="3" r="2.2" fill="none" stroke="#c8c8c8" stroke-width="0.9"/></svg><div class="t" style="left:1275px;top:331px;width:46px;text-align:right;font-size:13.5px;color:#f0f0f0">0</div><svg style="left:1326px;top:330px;" width="9" height="14" viewBox="0 0 9 14"><path d="M0.5 5 L4.5 1 L8.5 5Z M0.5 9 L4.5 13 L8.5 9Z" fill="#c8c8c8"/></svg><div class="t" style="left:1080px;top:359px;font-size:13.5px;color:#f4f4f4">Flick directi...</div><div style="left:1175px;top:353px;width:208px;height:24px;background:#58595b;border:1px solid #2f3032"></div><svg style="left:1181px;top:362px;" width="6" height="6" viewBox="0 0 6 6"><circle cx="3" cy="3" r="2.2" fill="none" stroke="#c8c8c8" stroke-width="0.9"/></svg><div class="t" style="left:1195px;top:359px;font-size:13.5px;color:#f4f4f4">HorizontalFlick</div><svg style="left:1366px;top:363px;" width="10" height="5" viewBox="0 0 10 5"><path d="M0 0 H10 L5 5Z" fill="#d0d0d0"/></svg><div style="left:1175px;top:381px;width:208px;height:24px;background:#58595b;border:1px solid #2f3032"></div><svg style="left:1181px;top:390px;" width="6" height="6" viewBox="0 0 6 6"><circle cx="3" cy="3" r="2.2" fill="none" stroke="#c8c8c8" stroke-width="0.9"/></svg><div class="t" style="left:1195px;top:387px;font-size:13.5px;color:#f4f4f4">DragAndOvershootBounds</div><svg style="left:1366px;top:391px;" width="10" height="5" viewBox="0 0 10 5"><path d="M0 0 H10 L5 5Z" fill="#d0d0d0"/></svg><div class="t" style="left:1080px;top:387px;font-size:13.5px;color:#f4f4f4">Behavior</div><div class="t" style="left:1080px;top:411px;font-size:13.5px;color:#f4f4f4">Interactive</div><div style="left:1176px;top:410px;width:14px;height:14px;background:#2b2c2d"></div><svg style="left:1178px;top:412px;" width="10" height="10" viewBox="0 0 10 10"><path d="M1.2 5.2 L3.8 9.2 L9.5 0.8" fill="none" stroke="#e0e0e0" stroke-width="1.5"/></svg><svg style="left:1200px;top:414px;" width="6" height="6" viewBox="0 0 6 6"><circle cx="3" cy="3" r="2.2" fill="none" stroke="#c8c8c8" stroke-width="0.9"/></svg><div style="left:1175px;top:429px;width:63px;height:2px;background:#2b2c2d"></div><div style="left:1072px;top:431px;width:305px;height:10px;background:#58595b"></div><div style="left:1377px;top:431px;width:12px;height:10px;background:#444547"></div><div style="left:1389px;top:431px;width:10px;height:10px;background:#4f5052"></div><div style="left:1072px;top:441px;width:327px;height:25px;background:#404244"></div><div class="t" style="left:1083px;top:446px;font-size:13.7px;color:#eeeeee">Connections</div><svg style="left:1264px;top:449px;" width="7" height="10" viewBox="0 0 7 10"><path d="M0 4 L3.5 0 L7 4Z M0 6 L3.5 10 L7 6Z" fill="#d0d0d0"/></svg><div style="left:1276px;top:446px;width:1px;height:15px;background:#666"></div><svg style="left:1300px;top:447px;" width="13" height="13" viewBox="0 0 13 13"><path d="M6.5 0 V13 M0 6.5 H13" stroke="#e0e0e0" stroke-width="1.6"/></svg><svg style="left:1327px;top:453px;" width="12" height="2" viewBox="0 0 12 2"><path d="M0 1 H12" stroke="#707274" stroke-width="1.6"/></svg><svg style="left:1353px;top:448px;" width="14" height="12" viewBox="0 0 14 12"><path d="M0.5 0.5h7v10h-7z M0.5 5.5h7" fill="none" stroke="#d0d0d0"/><path d="M9 5.5h5M11.5 3v5" stroke="#d0d0d0"/></svg><svg style="left:1380px;top:449px;" width="12" height="11" viewBox="0 0 12 11"><rect x="0.5" y="1.5" width="11" height="9" fill="none" stroke="#d0d0d0"/><path d="M0.5 3.5h11" stroke="#d0d0d0"/><path d="M4 5.5 L8 5.5 L6 7.5Z" fill="#d0d0d0"/></svg><div style="left:1072px;top:466px;width:327px;height:22px;background:#404244"></div><div style="left:1072px;top:466px;width:88px;height:22px;background:#ffffff"></div><div style="left:1072px;top:488px;width:327px;height:4px;background:#ffffff"></div><div class="t" style="left:1081px;top:471px;font-size:12px;font-weight:bold;color:#333">Connections</div><div class="t" style="left:1180px;top:471px;font-size:12px;font-weight:bold;color:#f0f0f0">Bindings</div><div class="t" style="left:1262px;top:471px;font-size:12px;font-weight:bold;color:#f0f0f0">Properties</div><div style="left:1352px;top:466px;width:17px;height:22px;overflow:hidden"><div class="t" style="left:1px;top:5px;font-size:12px;font-weight:bold;color:#f0f0f0">Back</div></div><div style="left:1369px;top:466px;width:15px;height:22px;background:#4a4b4d;border:1px solid #3a3b3d"></div><div style="left:1384px;top:466px;width:15px;height:22px;background:#4a4b4d;border:1px solid #3a3b3d"></div><svg style="left:1373px;top:472px;" width="6" height="10" viewBox="0 0 6 10"><path d="M6 0 L0 5 L6 10Z" fill="#6a6c6e"/></svg><svg style="left:1388px;top:472px;" width="6" height="10" viewBox="0 0 6 10"><path d="M0 0 L6 5 L0 10Z" fill="#111"/></svg><div style="left:1072px;top:492px;width:327px;height:422px;background:#4f5052"></div><div style="left:1074px;top:494px;width:76px;height:23px;background:#444547;border:1px solid #111"></div><div class="t" style="left:1074.0px;top:500px;width:76px;text-align:center;font-size:12px;color:#d8d8d8">Target</div><div style="left:1154px;top:494px;width:156px;height:23px;background:#444547;border:1px solid #111"></div><div class="t" style="left:1154.0px;top:500px;width:156px;text-align:center;font-size:12px;color:#d8d8d8">Signal Handler</div><div style="left:1314px;top:494px;width:164px;height:23px;background:#444547;border:1px solid #111"></div><div class="t" style="left:1314.0px;top:500px;width:164px;text-align:center;font-size:12px;color:#d8d8d8">Actions</div><div style="left:1072px;top:904px;width:317px;height:10px;background:#444547"></div><div style="left:1072px;top:904px;width:222px;height:10px;background:#58595b"></div></body></html>
